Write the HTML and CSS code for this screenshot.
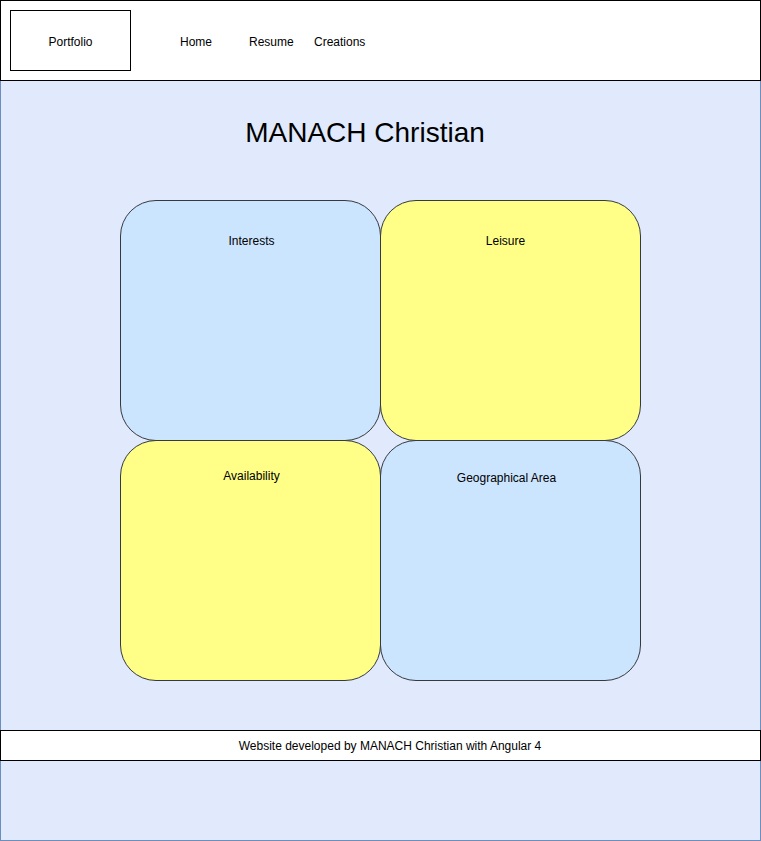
FILE: index.html
```html
<!DOCTYPE html>
<html>
<head>
<meta charset="utf-8">
<link rel="stylesheet" href="styles.css">
</head>
<body>
<header class="header">
  <div class="brand">Portfolio</div>
  <nav class="nav">
    <span class="nav-item nav-home">Home</span>
    <span class="nav-item nav-resume">Resume</span>
    <span class="nav-item">Creations</span>
  </nav>
</header>
<main class="main">
  <h1 class="title">MANACH Christian</h1>
  <section class="grid">
    <div class="card blue c1">Interests</div>
    <div class="card yellow c2">Leisure</div>
    <div class="card yellow c3">Availability</div>
    <div class="card blue c4">Geographical Area</div>
  </section>
  <footer class="footer">Website developed by MANACH Christian with Angular 4</footer>
</main>
</body>
</html>
```

FILE: styles.css
```css
* { box-sizing: border-box; }
html, body { margin: 0; padding: 0; }
body {
  font-family: "Liberation Sans", Arial, Helvetica, sans-serif;
  color: #000;
  background: #fff;
  width: 761px;
  height: 841px;
  overflow: hidden;
}
.header {
  width: 761px;
  height: 81px;
  border: 1px solid #000;
  padding: 9px;
  display: flex;
  align-items: flex-start;
  background: #fff;
  position: relative;
  z-index: 1;
}
.brand {
  width: 121px;
  height: 61px;
  border: 1px solid #000;
  display: flex;
  align-items: center;
  justify-content: center;
  font-size: 12px;
  padding-top: 2px;
}
.nav {
  display: flex;
  height: 61px;
  align-items: center;
  margin-left: 49px;
  font-size: 12px;
  padding-top: 2px;
}
.nav-home { width: 69px; }
.nav-resume { width: 65px; }
.main {
  width: 761px;
  height: 760px;
  background: #e0eafc;
  border: 1px solid #6c8ebf;
  border-top: none;
  display: flex;
  flex-direction: column;
}
.title {
  margin: 36px 0 0 0;
  font-weight: normal;
  font-size: 28px;
  line-height: 32px;
  text-align: center;
  width: 728px;
}
.grid {
  margin: 51px 0 0 119px;
  display: grid;
  grid-template-columns: 260px 260px;
  grid-template-rows: 240px 240px;
}
.card {
  width: 261px;
  height: 241px;
  border: 1px solid #36393d;
  border-radius: 36px;
  font-size: 12px;
  line-height: 14px;
  text-align: center;
  padding-top: 33px;
}
.blue { background: #cce5ff; }
.yellow { background: #ffff88; }
.c1 { padding-left: 2px; }
.c2 { padding-right: 10px; }
.c3 { padding-top: 28px; padding-left: 2px; }
.c4 { padding-top: 30px; padding-right: 8px; }
.footer {
  margin: 50px 0 0 -1px;
  width: 761px;
  height: 31px;
  border: 1px solid #000;
  background: #fff;
  font-size: 12px;
  display: flex;
  align-items: center;
  justify-content: center;
  padding-left: 19px;
  padding-top: 1px;
}
```
